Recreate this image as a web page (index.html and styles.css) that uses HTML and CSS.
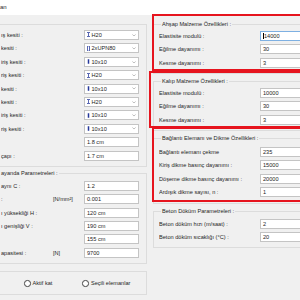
FILE: index.html
```html
<!DOCTYPE html>
<html lang="tr">
<head>
  <meta charset="UTF-8">
  <title>Kalıp Hesabı</title>
  <link rel="stylesheet" href="styles.css">
</head>
<body>
  <div class="titlebar">an</div>

  <div class="main">
    <div class="left">
      <div class="group g-sections">
        <div class="row"><span class="lbl">ış kesiti :</span>
          <div class="select"><svg class="ico" viewBox="0 0 4 6"><path d="M0 0H4V1H2.5V5H4V6H0V5H1.5V1H0Z"/></svg><span class="val">H20</span><svg class="chev" viewBox="0 0 5 3"><path d="M0.5 0.5L2.5 2.5L4.5 0.5"/></svg></div>
        </div>
        <div class="row"><span class="lbl">kesiti :</span>
          <div class="select"><svg class="ico" viewBox="0 0 4 6"><path d="M0 0H1.6V1H1V5H1.6V6H0Z M2.4 0H4V6H2.4V5H3V1H2.4Z"/></svg><span class="val">2xUPN80</span><svg class="chev" viewBox="0 0 5 3"><path d="M0.5 0.5L2.5 2.5L4.5 0.5"/></svg></div>
        </div>
        <div class="row"><span class="lbl">iriş kesiti :</span>
          <div class="select"><svg class="ico" viewBox="0 0 4 6"><rect x="1" y="0" width="2" height="6"/></svg><span class="val">10x10</span><svg class="chev" viewBox="0 0 5 3"><path d="M0.5 0.5L2.5 2.5L4.5 0.5"/></svg></div>
        </div>
        <div class="row"><span class="lbl">riş kesiti :</span>
          <div class="select"><svg class="ico" viewBox="0 0 4 6"><path d="M0 0H4V1H2.5V5H4V6H0V5H1.5V1H0Z"/></svg><span class="val">H20</span><svg class="chev" viewBox="0 0 5 3"><path d="M0.5 0.5L2.5 2.5L4.5 0.5"/></svg></div>
        </div>
        <div class="row"><span class="lbl">kesiti :</span>
          <div class="select"><svg class="ico" viewBox="0 0 4 6"><rect x="1" y="0" width="2" height="6"/></svg><span class="val">10x10</span><svg class="chev" viewBox="0 0 5 3"><path d="M0.5 0.5L2.5 2.5L4.5 0.5"/></svg></div>
        </div>
        <div class="row"><span class="lbl">kesiti :</span>
          <div class="select"><svg class="ico" viewBox="0 0 4 6"><path d="M0 0H4V1H2.5V5H4V6H0V5H1.5V1H0Z"/></svg><span class="val">H20</span><svg class="chev" viewBox="0 0 5 3"><path d="M0.5 0.5L2.5 2.5L4.5 0.5"/></svg></div>
        </div>
        <div class="row"><span class="lbl">iriş kesiti :</span>
          <div class="select"><svg class="ico" viewBox="0 0 4 6"><rect x="1" y="0" width="2" height="6"/></svg><span class="val">10x10</span><svg class="chev" viewBox="0 0 5 3"><path d="M0.5 0.5L2.5 2.5L4.5 0.5"/></svg></div>
        </div>
        <div class="row"><span class="lbl">riş kesiti :</span>
          <div class="select"><svg class="ico" viewBox="0 0 4 6"><rect x="1" y="0" width="2" height="6"/></svg><span class="val">10x10</span><svg class="chev" viewBox="0 0 5 3"><path d="M0.5 0.5L2.5 2.5L4.5 0.5"/></svg></div>
        </div>
        <div class="row"><span class="lbl"></span><div class="field">1.8 cm</div></div>
        <div class="row"><span class="lbl">çapı :</span><div class="field">1.7 cm</div></div>
      </div>

      <div class="group g-params">
        <div class="group-title">ayanda Parametreleri :</div>
        <div class="rows">
          <div class="row"><span class="lbl">aynı C :</span><div class="field">1.2</div></div>
          <div class="row"><span class="lbl">:</span><span class="unit">[N/mm²]</span><div class="field">0.001</div></div>
          <div class="row"><span class="lbl">ı yüksekliği H :</span><div class="field">120 cm</div></div>
          <div class="row"><span class="lbl">ı genişliği V :</span><div class="field">190 cm</div></div>
          <div class="row"><span class="lbl"></span><div class="field">155 cm</div></div>
          <div class="row"><span class="lbl">apasitesi :</span><span class="unit">[N]</span><div class="field">9700</div></div>
        </div>
      </div>

      <div class="group g-radios">
        <label class="radio"><span class="dot"></span>Aktif kat</label>
        <label class="radio"><span class="dot"></span>Seçili elemanlar</label>
      </div>
    </div>

    <div class="right">
      <div class="group g-wood">
        <div class="group-title">Ahşap Malzeme Özellikleri :</div>
        <div class="rows">
          <div class="row"><span class="lbl">Elastisite modulü :</span><div class="field focused"><span class="caret"></span>14000</div></div>
          <div class="row"><span class="lbl">Eğilme dayanımı :</span><div class="field">30</div></div>
          <div class="row"><span class="lbl">Kesme dayanımı :</span><div class="field">3</div></div>
        </div>
      </div>

      <div class="group g-mould">
        <div class="group-title">Kalıp Malzeme Özellikleri :</div>
        <div class="rows">
          <div class="row"><span class="lbl">Elastisite modulü :</span><div class="field">10000</div></div>
          <div class="row"><span class="lbl">Eğilme dayanımı :</span><div class="field">30</div></div>
          <div class="row"><span class="lbl">Kesme dayanımı :</span><div class="field">3</div></div>
        </div>
      </div>

      <div class="group g-link">
        <div class="group-title">Bağlantı Elemanı ve Dikme Özellikleri :</div>
        <div class="rows">
          <div class="row"><span class="lbl">Bağlantı elemanı çekme</span><div class="field">235</div></div>
          <div class="row"><span class="lbl">Kiriş dikme basınç dayanımı :</span><div class="field">15000</div></div>
          <div class="row"><span class="lbl">Döşeme dikme basınç dayanımı :</span><div class="field">20000</div></div>
          <div class="row"><span class="lbl">Ardışık dikme sayısı, n :</span><div class="field">1</div></div>
        </div>
      </div>

      <div class="group g-concrete">
        <div class="group-title">Beton Döküm Parametreleri :</div>
        <div class="rows">
          <div class="row"><span class="lbl">Beton döküm hızı (m/saat) :</span><div class="field">2</div></div>
          <div class="row"><span class="lbl">Beton döküm sıcaklığı (°C) :</span><div class="field">20</div></div>
        </div>
      </div>
    </div>
  </div>

  <div class="mark mark-wood"></div>
  <div class="mark mark-mould"></div>
  <div class="mark mark-link"></div>
</body>
</html>
```

FILE: styles.css
```css
* {
  box-sizing: border-box;
}

html, body {
  width: 300px;
  height: 300px;
  overflow: hidden;
}

body {
  margin: 0;
  background-color: #f0f0f0;
  font-family: "Liberation Sans", Arial, sans-serif;
  font-size: 5.6px;
  color: #1e1e1e;
}

.titlebar {
  height: 15px;
  line-height: 14px;
  background: #fff;
  font-size: 6px;
}

.main {
  display: flex;
  align-items: flex-start;
}

.left {
  flex: none;
  width: 147px;
  padding-top: 9px;
}

.right {
  flex: none;
  width: 147px;
  margin-left: 6px;
  padding-top: 9px;
}

/* group boxes */
.group {
  border: 1px solid #dcdcdc;
}

.group-title {
  width: fit-content;
  margin-top: -4px;
  margin-left: 2px;
  padding: 0 1px;
  line-height: 7px;
  height: 7px;
  background: #f0f0f0;
  white-space: nowrap;
}

.row {
  display: flex;
  align-items: center;
  height: 13.4px;
}

.lbl {
  flex: 1;
  white-space: nowrap;
  overflow: hidden;
}

.unit {
  width: 31px;
  white-space: nowrap;
}

.field,
.select {
  flex: none;
  height: 10px;
  background: #fff;
  border: 1px solid #c4c4c4;
  line-height: 8px;
  padding-left: 2px;
  white-space: nowrap;
}

.field.focused {
  border-color: #7eb0e2;
  display: flex;
  align-items: center;
}

.caret {
  width: 0.6px;
  height: 6px;
  background: #000;
  margin-right: 0.4px;
}

.select {
  display: flex;
  align-items: center;
  padding-left: 1.5px;
}

.select .val {
  flex: 1;
  margin-left: 2px;
}

.ico {
  width: 3px;
  height: 5px;
  fill: #24379a;
}

.chev {
  width: 4px;
  height: 2.5px;
  margin-right: 2.5px;
  fill: none;
  stroke: #8a8a8a;
  stroke-width: 0.7;
}

/* left column: the window is cut at its left edge */
.left .group {
  border-left: none;
  padding-left: 1px;
  padding-right: 7px;
}

.left .field,
.left .select {
  width: 55px;
}

.g-sections {
  padding-top: 3.3px;
  padding-bottom: 3.7px;
}

.g-params {
  margin-top: 6px;
  padding-bottom: 3px;
}

.g-params .group-title {
  margin-left: -1px;
}

.g-params .rows {
  padding-top: 2.3px;
}

.left .g-radios {
  margin-top: 7px;
  height: 24px;
  display: flex;
  align-items: center;
  gap: 30px;
  padding-top: 1.5px;
  padding-left: 24px;
}

.radio {
  display: flex;
  align-items: center;
  gap: 2px;
}

.dot {
  width: 6.5px;
  height: 6.5px;
  border: 0.8px solid #444;
  border-radius: 50%;
  background: #fff;
}

/* right column: cut at the right edge */
.right .group {
  border-right: none;
  padding-left: 5px;
  padding-bottom: 4px;
}

.right .lbl {
  flex: none;
  width: 101px;
}

.right .field {
  width: 40px;
  border-right: none;
}

.g-wood .rows,
.g-mould .rows {
  padding-top: 1.3px;
}

.g-mould {
  margin-top: 6.5px;
}

.g-link {
  margin-top: 6.5px;
}

.g-link .rows {
  padding-top: 3.3px;
}

.right .g-concrete {
  margin-top: 7px;
  padding-bottom: 3px;
}

.g-concrete .rows {
  padding-top: 2.3px;
}

/* red highlight frames drawn over the screenshot */
.mark {
  position: absolute;
  border: 2px solid #e6141e;
  border-right: none;
}

.mark-wood {
  left: 152px;
  top: 14px;
  width: 148px;
  height: 57px;
}

.mark-mould {
  left: 149px;
  top: 71px;
  width: 151px;
  height: 57px;
}

.mark-link {
  left: 152px;
  top: 126.5px;
  width: 148px;
  height: 75px;
}
```
